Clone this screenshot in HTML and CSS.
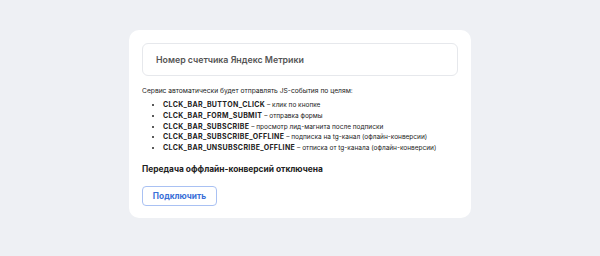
FILE: index.html
```html
<!DOCTYPE html>
<html>
<head>
    <title>Яндекс Метрика</title>
    <link rel="stylesheet" href="styles.css">
</head>
<body>
    <div class="card">
        <div class="field">Номер счетчика Яндекс Метрики</div>

        <p class="intro">Сервис автоматически будет отправлять JS-события по целям:</p>
        <ul class="goals">
            <li><b>CLCK_BAR_BUTTON_CLICK</b> – клик по кнопке</li>
            <li><b>CLCK_BAR_FORM_SUBMIT</b> – отправка формы</li>
            <li><b>CLCK_BAR_SUBSCRIBE</b> – просмотр лид-магнита после подписки</li>
            <li><b>CLCK_BAR_SUBSCRIBE_OFFLINE</b> – подписка на tg-канал (офлайн-конверсии)</li>
            <li><b>CLCK_BAR_UNSUBSCRIBE_OFFLINE</b> – отписка от tg-канала (офлайн-конверсии)</li>
        </ul>

        <h4 class="status">Передача оффлайн-конверсий отключена</h4>
        <button class="connect">Подключить</button>
    </div>
</body>
</html>
```

FILE: styles.css
```css
body { margin: 0; background: #eef0f4; font-family: Inter, "Noto Sans", sans-serif; color: #222; }
.card { width: 316px; margin: 30px auto 0; padding: 13px 13px 12px; background: #fff; border-radius: 10px; }
.field { height: 31px; line-height: 31px; padding-left: 13px; border: 1px solid #e6e8ec; border-radius: 6px; font-size: 8.8px; font-weight: 600; color: #555; }
.intro { margin: 10px 0 3px; font-size: 6.7px; line-height: 11px; }
.goals { margin: 0; padding-left: 21px; font-size: 6.5px; line-height: 10.8px; white-space: nowrap; }
.goals li::marker { font-size: 6px; }
.goals b { font-size: 7px; font-weight: 700; letter-spacing: 0.35px; }
.status { margin: 9px 0 0; font-size: 8.4px; font-weight: 700; line-height: 12px; }
.connect { margin-top: 11px; width: 75px; height: 20px; padding: 0; background: #fff; border: 1px solid #a9c1f3; border-radius: 4px; color: #3a6fd8; font-family: inherit; font-size: 8.3px; font-weight: 700; }
```
